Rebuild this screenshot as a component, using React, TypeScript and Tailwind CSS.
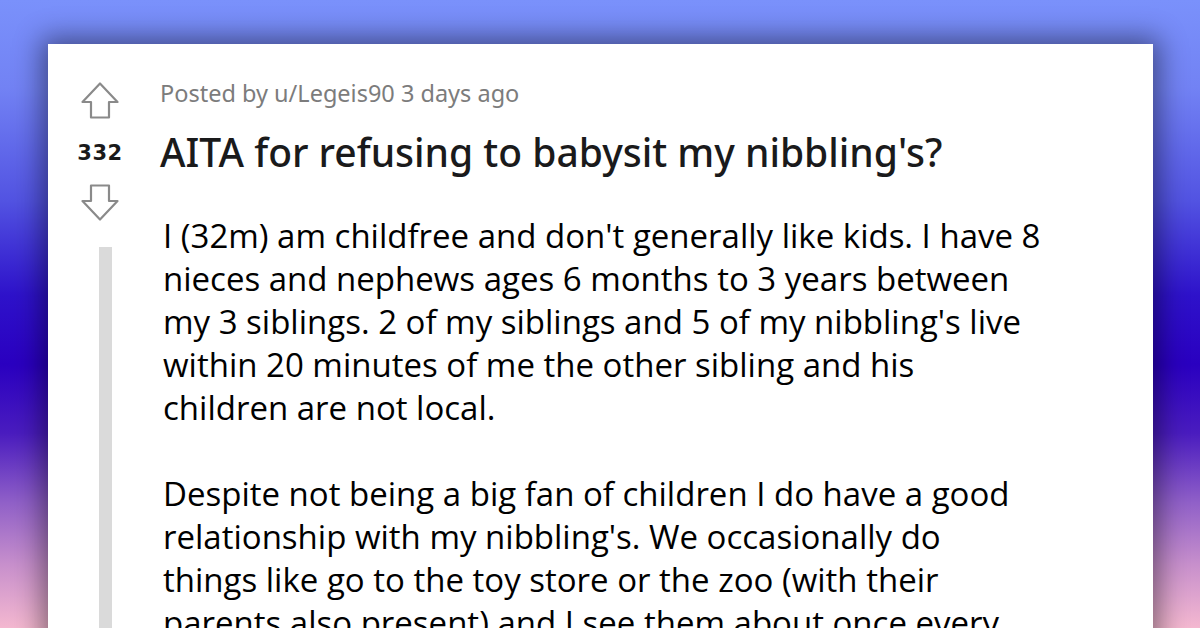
import React from 'react'

const bodyParagraphs = [
  [
    'I (32m) am childfree and don\'t generally like kids. I have 8',
    'nieces and nephews ages 6 months to 3 years between',
    'my 3 siblings. 2 of my siblings and 5 of my nibbling\'s live',
    'within 20 minutes of me the other sibling and his',
    'children are not local.'
  ],
  [
    'Despite not being a big fan of children I do have a good',
    'relationship with my nibbling\'s. We occasionally do',
    'things like go to the toy store or the zoo (with their',
    'parents also present) and I see them about once every'
  ]
]

const VoteArrow = ({ down = false }: { down?: boolean }) => (
  <svg
    width="38"
    height="37"
    viewBox="0 0 38 37"
    fill="none"
    className={down ? 'rotate-180' : ''}
  >
    <path
      d="M19 1.5 L36.5 20 H28 V35.5 H10 V20 H1.5 Z"
      stroke="#8a8a8a"
      strokeWidth="2.2"
      strokeLinejoin="round"
    />
  </svg>
)

export default function App() {
  return (
    <div className="h-[628px] w-[1200px] overflow-hidden bg-[linear-gradient(to_bottom,#7a91fb_0%,#7282f4_14%,#5253e2_32%,#2e12ca_47%,#2a00c0_58%,#4a1cbf_69%,#9060c8_80%,#c890cc_90%,#f4b8d0_100%)] px-[48px] pt-[44px]">
      <div className="flex h-[620px] w-[1105px] bg-white shadow-[0_0_26px_6px_rgba(0,0,0,0.45)]">
        {/* ---- vote column ---- */}
        <div className="flex w-[104px] flex-shrink-0 flex-col items-center pt-[38px]">
          <VoteArrow />
          <span className="mt-[23px] font-['DejaVu_Sans',sans-serif] text-[21px] leading-[22px] font-bold tracking-[0.5px] text-[#1a1a1b]">
            332
          </span>
          <div className="mt-[20px]">
            <VoteArrow down />
          </div>
          <div className="mt-[26px] ml-[11px] w-[13px] flex-1 bg-[#dadada]" />
        </div>

        {/* ---- post content ---- */}
        <div className="flex flex-col pl-[8px] pt-[34px]">
          <div className="font-['Noto_Sans',sans-serif] text-[23.5px] leading-[30px] text-[#7c7c7c]">
            Posted by u/Legeis90 3 days ago
          </div>
          <h1 className="mt-[21px] font-['Noto_Sans',sans-serif] text-[39px] leading-[46px] font-medium text-[#1a1a1b]">
            AITA for refusing to babysit my nibbling's?
          </h1>
          <div className="mt-[39px] pl-[3px] font-['Open_Sans',sans-serif] text-[33px] leading-[43px] text-black">
            {bodyParagraphs.map((lines, i) => (
              <p key={i} className="mb-[43px] whitespace-nowrap">
                {lines.map((line, j) => (
                  <span key={j} className="block">
                    {line}
                  </span>
                ))}
              </p>
            ))}
          </div>
        </div>
      </div>
    </div>
  )
}
